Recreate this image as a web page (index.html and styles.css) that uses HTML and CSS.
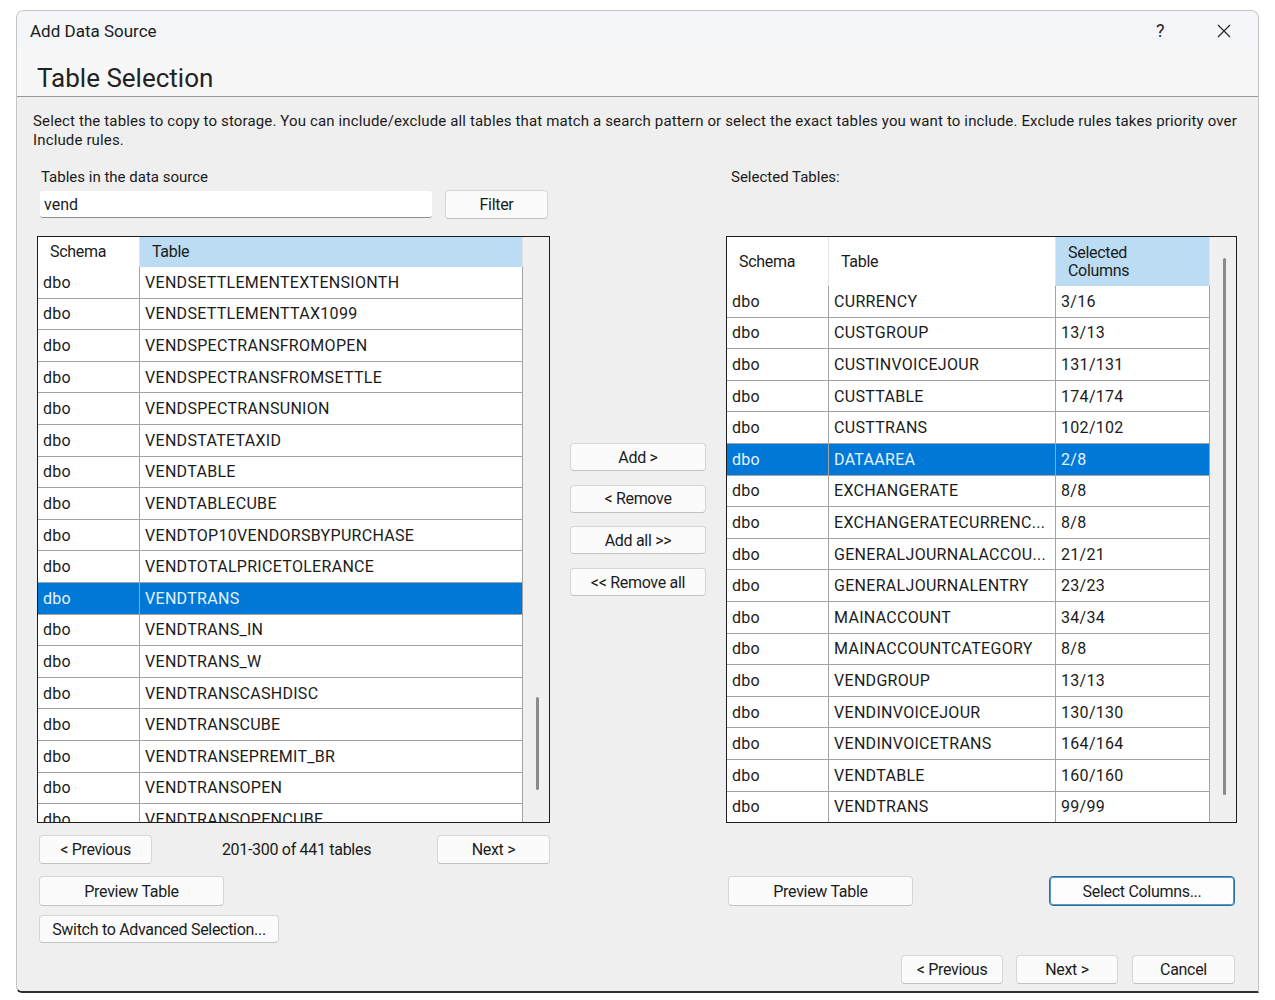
FILE: index.html
```html
<!DOCTYPE html>
<html lang="en">
<head>
    <meta charset="UTF-8">
    <title>Add Data Source</title>
    <link rel="stylesheet" href="styles.css">
</head>
<body>
    <div class="window">
        <div class="titlebar">
            <span class="title">Add Data Source</span>
            <span class="help">?</span>
            <span class="close">
                <svg width="16" height="16" viewBox="0 0 16 16"><path d="M2 2 L14 14 M14 2 L2 14" stroke="#2b2b2b" stroke-width="1.3" fill="none"/></svg>
            </span>
        </div>
        <div class="header">
            <h1>Table Selection</h1>
        </div>
        <p class="desc">Select the tables to copy to storage. You can include/exclude all tables that match a search pattern or select the exact tables you want to include. Exclude rules takes priority over<br>Include rules.</p>

        <div class="main">
            <div class="left">
                <div class="label">Tables in the data source</div>
                <div class="filter-row">
                    <input class="search" type="text" value="vend">
                    <button class="btn filter-btn">Filter</button>
                </div>

                <div class="grid grid-left">
                    <div class="grid-body">
                        <div class="grid-head">
                            <div class="c c-schema">Schema</div>
                            <div class="c c-table sorted">Table</div>
                        </div>
                        <div class="row"><div class="c c-schema">dbo</div><div class="c c-table">VENDSETTLEMENTEXTENSIONTH</div></div>
                        <div class="row"><div class="c c-schema">dbo</div><div class="c c-table">VENDSETTLEMENTTAX1099</div></div>
                        <div class="row"><div class="c c-schema">dbo</div><div class="c c-table">VENDSPECTRANSFROMOPEN</div></div>
                        <div class="row"><div class="c c-schema">dbo</div><div class="c c-table">VENDSPECTRANSFROMSETTLE</div></div>
                        <div class="row"><div class="c c-schema">dbo</div><div class="c c-table">VENDSPECTRANSUNION</div></div>
                        <div class="row"><div class="c c-schema">dbo</div><div class="c c-table">VENDSTATETAXID</div></div>
                        <div class="row"><div class="c c-schema">dbo</div><div class="c c-table">VENDTABLE</div></div>
                        <div class="row"><div class="c c-schema">dbo</div><div class="c c-table">VENDTABLECUBE</div></div>
                        <div class="row"><div class="c c-schema">dbo</div><div class="c c-table">VENDTOP10VENDORSBYPURCHASE</div></div>
                        <div class="row"><div class="c c-schema">dbo</div><div class="c c-table">VENDTOTALPRICETOLERANCE</div></div>
                        <div class="row selected"><div class="c c-schema">dbo</div><div class="c c-table">VENDTRANS</div></div>
                        <div class="row"><div class="c c-schema">dbo</div><div class="c c-table">VENDTRANS_IN</div></div>
                        <div class="row"><div class="c c-schema">dbo</div><div class="c c-table">VENDTRANS_W</div></div>
                        <div class="row"><div class="c c-schema">dbo</div><div class="c c-table">VENDTRANSCASHDISC</div></div>
                        <div class="row"><div class="c c-schema">dbo</div><div class="c c-table">VENDTRANSCUBE</div></div>
                        <div class="row"><div class="c c-schema">dbo</div><div class="c c-table">VENDTRANSEPREMIT_BR</div></div>
                        <div class="row"><div class="c c-schema">dbo</div><div class="c c-table">VENDTRANSOPEN</div></div>
                        <div class="row"><div class="c c-schema">dbo</div><div class="c c-table">VENDTRANSOPENCUBE</div></div>
                    </div>
                    <div class="scroll"><div class="thumb thumb-left"></div></div>
                </div>

                <div class="pager">
                    <button class="btn pager-btn">&lt; Previous</button>
                    <span class="pager-info">201-300 of 441 tables</span>
                    <button class="btn pager-btn">Next &gt;</button>
                </div>
                <button class="btn preview-btn">Preview Table</button>
                <button class="btn advanced-btn">Switch to Advanced Selection...</button>
            </div>

            <div class="middle">
                <button class="btn move-btn">Add &gt;</button>
                <button class="btn move-btn">&lt; Remove</button>
                <button class="btn move-btn">Add all &gt;&gt;</button>
                <button class="btn move-btn">&lt;&lt; Remove all</button>
            </div>

            <div class="right">
                <div class="label">Selected Tables:</div>

                <div class="grid grid-right">
                    <div class="grid-body">
                        <div class="grid-head tall">
                            <div class="c c-schema">Schema</div>
                            <div class="c c-table">Table</div>
                            <div class="c c-cols sorted">Selected<br>Columns</div>
                        </div>
                        <div class="row"><div class="c c-schema">dbo</div><div class="c c-table">CURRENCY</div><div class="c c-cols">3/16</div></div>
                        <div class="row"><div class="c c-schema">dbo</div><div class="c c-table">CUSTGROUP</div><div class="c c-cols">13/13</div></div>
                        <div class="row"><div class="c c-schema">dbo</div><div class="c c-table">CUSTINVOICEJOUR</div><div class="c c-cols">131/131</div></div>
                        <div class="row"><div class="c c-schema">dbo</div><div class="c c-table">CUSTTABLE</div><div class="c c-cols">174/174</div></div>
                        <div class="row"><div class="c c-schema">dbo</div><div class="c c-table">CUSTTRANS</div><div class="c c-cols">102/102</div></div>
                        <div class="row selected"><div class="c c-schema">dbo</div><div class="c c-table">DATAAREA</div><div class="c c-cols">2/8</div></div>
                        <div class="row"><div class="c c-schema">dbo</div><div class="c c-table">EXCHANGERATE</div><div class="c c-cols">8/8</div></div>
                        <div class="row"><div class="c c-schema">dbo</div><div class="c c-table">EXCHANGERATECURRENC...</div><div class="c c-cols">8/8</div></div>
                        <div class="row"><div class="c c-schema">dbo</div><div class="c c-table">GENERALJOURNALACCOU...</div><div class="c c-cols">21/21</div></div>
                        <div class="row"><div class="c c-schema">dbo</div><div class="c c-table">GENERALJOURNALENTRY</div><div class="c c-cols">23/23</div></div>
                        <div class="row"><div class="c c-schema">dbo</div><div class="c c-table">MAINACCOUNT</div><div class="c c-cols">34/34</div></div>
                        <div class="row"><div class="c c-schema">dbo</div><div class="c c-table">MAINACCOUNTCATEGORY</div><div class="c c-cols">8/8</div></div>
                        <div class="row"><div class="c c-schema">dbo</div><div class="c c-table">VENDGROUP</div><div class="c c-cols">13/13</div></div>
                        <div class="row"><div class="c c-schema">dbo</div><div class="c c-table">VENDINVOICEJOUR</div><div class="c c-cols">130/130</div></div>
                        <div class="row"><div class="c c-schema">dbo</div><div class="c c-table">VENDINVOICETRANS</div><div class="c c-cols">164/164</div></div>
                        <div class="row"><div class="c c-schema">dbo</div><div class="c c-table">VENDTABLE</div><div class="c c-cols">160/160</div></div>
                        <div class="row"><div class="c c-schema">dbo</div><div class="c c-table">VENDTRANS</div><div class="c c-cols">99/99</div></div>
                    </div>
                    <div class="scroll"><div class="thumb thumb-right"></div></div>
                </div>

                <div class="right-actions">
                    <button class="btn preview-btn">Preview Table</button>
                    <button class="btn columns-btn">Select Columns...</button>
                </div>
            </div>
        </div>

        <div class="footer">
            <button class="btn foot-btn">&lt; Previous</button>
            <button class="btn foot-btn">Next &gt;</button>
            <button class="btn foot-btn">Cancel</button>
        </div>
    </div>
</body>
</html>
```

FILE: styles.css
```css
body {
    margin: 0;
    background: #ffffff;
    font-family: Roboto, "Liberation Sans", sans-serif;
    color: #1b1b1b;
}
.window {
    margin: 10px 0 0 16px;
    width: 1243px;
    height: 983px;
    box-sizing: border-box;
    background: #efefef;
    border: 1px solid #c4c4c4;
    border-bottom: 2px solid #2e2e2e;
    border-radius: 8px 8px 0 6px;
    display: flex;
    flex-direction: column;
    overflow: hidden;
}
.titlebar {
    height: 37px;
    background: #f4f6f9;
    display: flex;
    align-items: center;
    padding: 2px 0 0 13px;
    box-sizing: border-box;
}
.title {
    font-size: 17px;
    flex: 1;
}
.help {
    font-size: 18px;
    width: 20px;
    margin-right: 40px;
}
.close {
    display: flex;
    margin-right: 26px;
}
.header {
    height: 49px;
    box-sizing: border-box;
    background: #f7f7f7;
    border-bottom: 1px solid #9b9b9b;
    display: flex;
    align-items: center;
    padding: 12px 0 0 20px;
}
.header h1 {
    margin: 0;
    font-size: 26px;
    font-weight: 400;
    color: #222;
}
.desc {
    margin: 0;
    padding: 15px 16px 0;
    font-size: 15px;
    line-height: 19px;
    letter-spacing: 0.14px;
}

.main {
    display: flex;
    align-items: flex-start;
    padding: 18px 0 0 20px;
}
.label {
    font-size: 15px;
    line-height: 18px;
    padding-left: 4px;
}
.left {
    width: 513px;
    display: flex;
    flex-direction: column;
    align-items: flex-start;
}
.filter-row {
    display: flex;
    align-items: center;
    width: 100%;
    margin-top: 4px;
    height: 29px;
}
.search {
    margin-left: 3px;
    width: 392px;
    height: 27px;
    box-sizing: border-box;
    border: none;
    border-bottom: 1px solid #8c8c8c;
    border-radius: 3px;
    background: #fff;
    font-family: inherit;
    font-size: 16px;
    padding: 0 4px;
    color: #1b1b1b;
}

/* botoes */
.btn {
    font-family: inherit;
    font-size: 16px;
    color: #1b1b1b;
    background: #fbfbfb;
    border: 1px solid #d6d6d6;
    border-bottom-color: #c2c2c2;
    border-radius: 4px;
    padding: 0;
    box-sizing: border-box;
    letter-spacing: -0.3px;
}
.filter-btn {
    margin-left: 13px;
    width: 103px;
    height: 29px;
}

/* grades */
.grid {
    display: flex;
    border: 1px solid #1e1e1e;
    height: 587px;
    box-sizing: border-box;
    margin-top: 17px;
    background: #fff;
}
.grid-left {
    width: 513px;
}
.grid-right {
    width: 511px;
    margin-top: 50px;
}
.grid-body {
    overflow: hidden;
    background: #fff;
}
.grid-left .grid-body {
    width: 485px;
}
.grid-right .grid-body {
    width: 483px;
}
.grid-head {
    display: flex;
    height: 30px;
    font-size: 16px;
    letter-spacing: -0.3px;
}
.grid-head.tall {
    height: 49px;
}
.grid-head .c {
    display: flex;
    align-items: center;
    padding-left: 12px;
    border-right: 1px solid #e4e4e4;
    line-height: 18px;
}
.grid-head .sorted {
    background: #bcdcf4;
}
.row {
    display: flex;
    height: 31.6px;
    box-sizing: border-box;
    border-bottom: 1px solid #a3a3a3;
    font-size: 16px;
    letter-spacing: 0.3px;
}
.row .c {
    display: flex;
    align-items: center;
    padding-left: 5px;
    border-right: 1px solid #a3a3a3;
    white-space: nowrap;
    overflow: hidden;
}
.c {
    box-sizing: border-box;
}
.c-schema {
    width: 102px;
    flex: none;
}
.grid-left .c-table {
    width: 383px;
}
.grid-right .c-table {
    width: 227px;
}
.c-cols {
    width: 154px;
}
.grid-right .grid-head .c-table {
    padding-left: 12px;
}
.row.selected {
    background: #0078d7;
    color: #e8f3ff;
}
.scroll {
    width: 26px;
    background: #f0f0f0;
}
.thumb {
    width: 3px;
    background: #8a8a8a;
    border-radius: 2px;
    margin-left: 13px;
}
.thumb-left {
    margin-top: 460px;
    height: 93px;
}
.thumb-right {
    margin-top: 21px;
    height: 537px;
}

.pager {
    display: flex;
    align-items: center;
    justify-content: space-between;
    width: 511px;
    margin: 12px 0 0 2px;
    height: 29px;
}
.pager-btn {
    width: 113px;
    height: 29px;
}
.pager-info {
    font-size: 16px;
    letter-spacing: -0.3px;
    margin-left: 4px;
}
.preview-btn {
    width: 185px;
    height: 30px;
    margin: 12px 0 0 2px;
}
.advanced-btn {
    width: 240px;
    height: 28px;
    margin: 9px 0 0 2px;
}

.middle {
    width: 136px;
    margin-left: 20px;
    display: flex;
    flex-direction: column;
    padding-top: 275px;
    gap: 13.7px;
}
.move-btn {
    height: 28px;
    width: 136px;
}

.right {
    width: 511px;
    margin-left: 20px;
}
.right .label {
    padding-left: 5px;
}
.right-actions {
    display: flex;
    justify-content: space-between;
    margin: 53px 2px 0 2px;
}
.right-actions .preview-btn {
    margin: 0;
}
.columns-btn {
    width: 186px;
    height: 30px;
    border: 1px solid #2a6f9f;
    box-shadow: inset 0 0 0 1px #5b9ac4;
    background: #fdfdfd;
}

.footer {
    margin-top: auto;
    display: flex;
    justify-content: flex-end;
    gap: 13px;
    padding: 0 23px 7px 0;
}
.foot-btn {
    width: 102px;
    height: 29px;
}
.foot-btn:last-child {
    width: 103px;
    margin-left: 1px;
}
```
